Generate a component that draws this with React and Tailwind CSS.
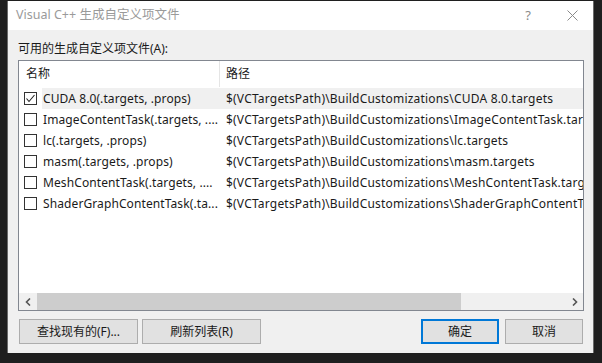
export default function App() {
  const font = { fontFamily: '"Noto Sans", "Noto Sans CJK SC", sans-serif' };
  const rows = [
    { name: "CUDA 8.0(.targets, .props)", path: "$(VCTargetsPath)\\BuildCustomizations\\CUDA 8.0.targets", checked: true },
    { name: "ImageContentTask(.targets, ....", path: "$(VCTargetsPath)\\BuildCustomizations\\ImageContentTask.tar" },
    { name: "lc(.targets, .props)", path: "$(VCTargetsPath)\\BuildCustomizations\\lc.targets" },
    { name: "masm(.targets, .props)", path: "$(VCTargetsPath)\\BuildCustomizations\\masm.targets" },
    { name: "MeshContentTask(.targets, ....", path: "$(VCTargetsPath)\\BuildCustomizations\\MeshContentTask.targ" },
    { name: "ShaderGraphContentTask(.ta...", path: "$(VCTargetsPath)\\BuildCustomizations\\ShaderGraphContentT" },
  ];
  return (
    <div className="w-[602px] h-[363px] bg-[#1f1f1f] pt-px pl-[7px] text-[12px] text-[#1a1a1a]" style={font}>
      <div className="w-[587px] h-[352px] flex flex-col bg-[#f0f0f0] border-x border-[#6a6a6a]">
        <div className="h-[29px] bg-white flex items-center pl-[8px] pr-[15px] text-[#9a9a9a]">
          <span className="leading-none text-[12.5px]">Visual C++ 生成自定义项文件</span>
          <span className="ml-auto text-[13px] leading-none text-[#8a8a8a]">?</span>
          <svg className="ml-[36px]" width="11" height="11" viewBox="0 0 11 11">
            <path d="M0.5 0.5 L10.5 10.5 M10.5 0.5 L0.5 10.5" stroke="#8a8a8a" strokeWidth="1" />
          </svg>
        </div>
        <div className="flex flex-col px-[10px]">
          <div className="pt-[11px] leading-[16px] h-[27px]">可用的生成自定义项文件(A):</div>
          <div className="mt-[3px] h-[251px] w-[566px] border border-[#828790] bg-white flex flex-col overflow-hidden">
            <div className="h-[26px] flex shrink-0">
              <div className="w-[201px] border-r border-[#e5e5e5] pl-[7px] flex items-center">名称</div>
              <div className="pl-[6px] flex items-center">路径</div>
            </div>
            <div className="flex-1 pt-px">
              {rows.map((r, i) => (
                <div key={i} className="h-[21px] flex items-center">
                  <div className="w-[23px] h-full flex items-center pl-[5px] shrink-0">
                    <div className="w-[13px] h-[13px] border border-[#333] bg-white flex items-center justify-center">
                      {r.checked && (
                        <svg width="11" height="11" viewBox="0 0 11 11">
                          <path d="M1.5 5.5 L4 8.5 L9.5 2" stroke="#222" strokeWidth="1.1" fill="none" />
                        </svg>
                      )}
                    </div>
                  </div>
                  <div className={"flex-1 h-full flex items-center whitespace-nowrap overflow-hidden " + (r.checked ? "bg-[#f0f0f0]" : "")}>
                    <div className="w-[184px] pl-px shrink-0 overflow-hidden tracking-[0.1px]">{r.name}</div>
                    <div className="whitespace-nowrap tracking-[0.2px]">{r.path}</div>
                  </div>
                </div>
              ))}
            </div>
            <div className="h-[17px] bg-[#f0f0f0] flex items-center shrink-0">
              <div className="w-[18px] h-full flex items-center justify-center">
                <svg width="7" height="8" viewBox="0 0 7 8">
                  <path d="M5 0.5 L1.5 4 L5 7.5" stroke="#555" strokeWidth="1.6" fill="none" />
                </svg>
              </div>
              <div className="w-[424px] h-full bg-[#cdcdcd]"></div>
              <div className="ml-auto w-[18px] h-full flex items-center justify-center">
                <svg width="7" height="8" viewBox="0 0 7 8">
                  <path d="M2 0.5 L5.5 4 L2 7.5" stroke="#555" strokeWidth="1.6" fill="none" />
                </svg>
              </div>
            </div>
          </div>
          <div className="mt-[8px] flex h-[25px]">
            <button className="w-[119px] h-full bg-[#e1e1e1] border border-[#adadad] flex items-center justify-center ml-px">查找现有的(F)...</button>
            <button className="w-[119px] h-full bg-[#e1e1e1] border border-[#adadad] flex items-center justify-center ml-[4px]">刷新列表(R)</button>
            <button className="ml-auto w-[78px] h-full bg-[#e1e1e1] border-2 border-[#0078d7] flex items-center justify-center">确定</button>
            <button className="w-[78px] h-full bg-[#e1e1e1] border border-[#adadad] flex items-center justify-center ml-[6px]">取消</button>
          </div>
        </div>
      </div>
    </div>
  );
}
